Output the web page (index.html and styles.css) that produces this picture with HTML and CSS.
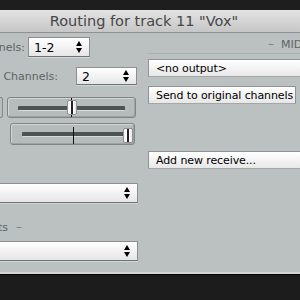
FILE: index.html
```html
<!DOCTYPE html>
<html>
<head>
<meta charset="utf-8">
<link rel="stylesheet" href="styles.css">
</head>
<body>
<div class="topbar"></div>
<div class="window">
  <div class="titlebar">Routing for track 11 "Vox"</div>
  <div class="content">
    <div class="left">
      <div class="row row1">
        <span class="label l1">Parent channels:</span>
        <div class="select s1"><span>1-2</span><span class="arrows"><i class="up"></i><i class="down"></i></span></div>
      </div>
      <div class="row row2">
        <span class="label l2">Track Channels:</span>
        <div class="select s2"><span>2</span><span class="arrows"><i class="up"></i><i class="down"></i></span></div>
      </div>
      <div class="row row3">
        <div class="btn"></div>
        <div class="slider sl1">
          <div class="track"></div>
          <div class="zero"></div>
          <div class="handle" style="left:59px"></div>
        </div>
      </div>
      <div class="row row4">
        <div class="slider sl2">
          <div class="track"></div>
          <div class="zero"></div>
          <div class="handle" style="left:112px"></div>
        </div>
      </div>
      <div class="row row5">
        <div class="select wide"><span></span><span class="arrows"><i class="up"></i><i class="down"></i></span></div>
      </div>
      <div class="row row6">
        <span class="label l3">Audio Hardware Outputs</span><span class="dash">–</span>
      </div>
      <div class="row row7">
        <div class="select wide"><span></span><span class="arrows"><i class="up"></i><i class="down"></i></span></div>
      </div>
    </div>
    <div class="right">
      <div class="rhead"><span class="dash">–</span><span class="label">MIDI Hardware Output</span></div>
      <div class="box b1">&lt;no output&gt;</div>
      <div class="box b2">Send to original channels</div>
      <div class="box b3">Add new receive...</div>
    </div>
  </div>
</div>
<div class="bottombar"></div>
</body>
</html>
```
FILE: styles.css
```css
html, body {
  margin: 0;
  padding: 0;
}
body {
  width: 300px;
  height: 300px;
  overflow: hidden;
  background: #1c1c1c;
  font-family: "DejaVu Sans", "Liberation Sans", sans-serif;
  font-size: 11px;
}
.topbar {
  height: 10px;
  background: #1e1e1e;
}
.window {
  height: 264px;
  background: #bbc1c0;
  display: flex;
  flex-direction: column;
  box-sizing: border-box;
  border-bottom: 2px solid #d2d6d5;
}
.titlebar {
  height: 22px;
  line-height: 23px;
  border-bottom: 1px solid #8d9190;
  background: linear-gradient(#e3e3e3, #c6c6c6);
  text-align: center;
  padding-right: 12px;
  font-size: 14.5px;
  color: #474747;
  white-space: nowrap;
  overflow: hidden;
}
.content {
  flex: 1;
  display: flex;
  gap: 2px;
}
.left {
  width: 146px;
  flex: none;
  display: flex;
  flex-direction: column;
}
.row {
  display: flex;
  align-items: center;
  white-space: nowrap;
  justify-content: flex-end;
}
.row > * { flex: none; }
.label {
  color: #5d6464;
  font-size: 11px;
}
.row1 { margin-top: 4px; height: 20px; padding-right: 56px; gap: 3px; }
.row2 { margin-top: 10px; height: 18px; padding-right: 9px; gap: 18px; }
.row3 { margin-top: 12px; height: 21px; padding-right: 10px; gap: 4px; }
.row4 { margin-top: 5px; height: 22px; padding-right: 11px; }
.row5 { margin-top: 38px; height: 20px; padding-right: 8px; }
.row6 { margin-top: 15px; height: 18px; padding-right: 124px; gap: 8px; }
.row7 { margin-top: 5px; height: 20px; padding-right: 8px; }

.select {
  box-sizing: border-box;
  height: 100%;
  display: flex;
  align-items: center;
  justify-content: space-between;
  padding: 0 6px 0 5px;
  background: linear-gradient(#ffffff, #f4f4f4 45%, #e6e6e6);
  border: 1px solid #8b8f8f;
  border-bottom-color: #6f7373;
  box-shadow: 0 1px 0 rgba(255,255,255,0.35);
  font-size: 12.5px;
  color: #000;
}
.s1 { width: 62px; }
.s2 { width: 61px; }
.wide { width: 190px; }
.arrows {
  display: flex;
  flex-direction: column;
  gap: 2px;
  margin-right: 1px;
}
.arrows i {
  display: block;
  width: 0;
  height: 0;
  border-left: 3.5px solid transparent;
  border-right: 3.5px solid transparent;
}
.arrows .up { border-bottom: 5px solid #000; }
.arrows .down { border-top: 5px solid #000; }

.btn {
  width: 40px;
  height: 21px;
  box-sizing: border-box;
  border: 1px solid #838988;
  border-radius: 2px;
  background: #b8bebd;
}
.slider {
  position: relative;
  box-sizing: border-box;
  height: 100%;
  border: 1px solid #7f8584;
  border-radius: 3px;
  background: #b6bcbb;
  box-shadow: inset 1px 1px 0 #d1d6d5, inset -1px -1px 0 #9da3a2;
}
.sl1 { width: 129px; }
.sl2 { width: 125px; }
.track {
  position: absolute;
  left: 10px;
  right: 10px;
  top: 8px;
  height: 4px;
  background: #4d5252;
  border-bottom: 1px solid #d7dbda;
  border-radius: 1px;
}
.sl2 .track { left: 11px; right: 7px; top: 8px; }
.zero {
  position: absolute;
  left: 63px;
  top: 0;
  bottom: 0;
  width: 1px;
  background: #111;
}
.sl2 .zero { left: 62px; top: 3px; }
.handle {
  position: absolute;
  top: 2px;
  width: 10px;
  height: 15px;
  box-sizing: border-box;
  border: 1px solid #8e8e8e;
  border-radius: 2px;
  background: linear-gradient(90deg, #f4f4f4 0, #fff 40%, #222 40%, #222 60%, #fff 60%, #e8e8e8 100%);
}
.sl2 .handle { top: 4px; }

.dash { color: #7a8080; font-size: 12px; }

.right {
  flex: 1;
  display: flex;
  flex-direction: column;
  min-width: 0;
}
.rhead {
  height: 18px;
  margin-top: 2px;
  display: flex;
  align-items: center;
  gap: 7px;
  padding-left: 120px;
  white-space: nowrap;
  border-bottom: 1px solid #a9afae;
}
.box {
  box-sizing: border-box;
  height: 18px;
  line-height: 17px;
  padding-left: 7px;
  white-space: nowrap;
  background: linear-gradient(#ffffff, #f3f3f3 50%, #e7e7e7);
  border-top: 1px solid #8f9493;
  border-left: 1px solid #8f9493;
  border-bottom: 1px solid #a3a8a7;
  font-size: 11px;
  letter-spacing: -0.1px;
  color: #000;
}
.b1 { margin-top: 5px; margin-right: -10px; }
.b2 { margin-top: 9px; margin-right: 4px; border-right: 1px solid #8f9493; }
.b3 { margin-top: 47px; margin-right: -10px; }
.bottombar {
  height: 26px;
  background: #1c1c1c;
  border-top: 1px solid #050505;
}
```
